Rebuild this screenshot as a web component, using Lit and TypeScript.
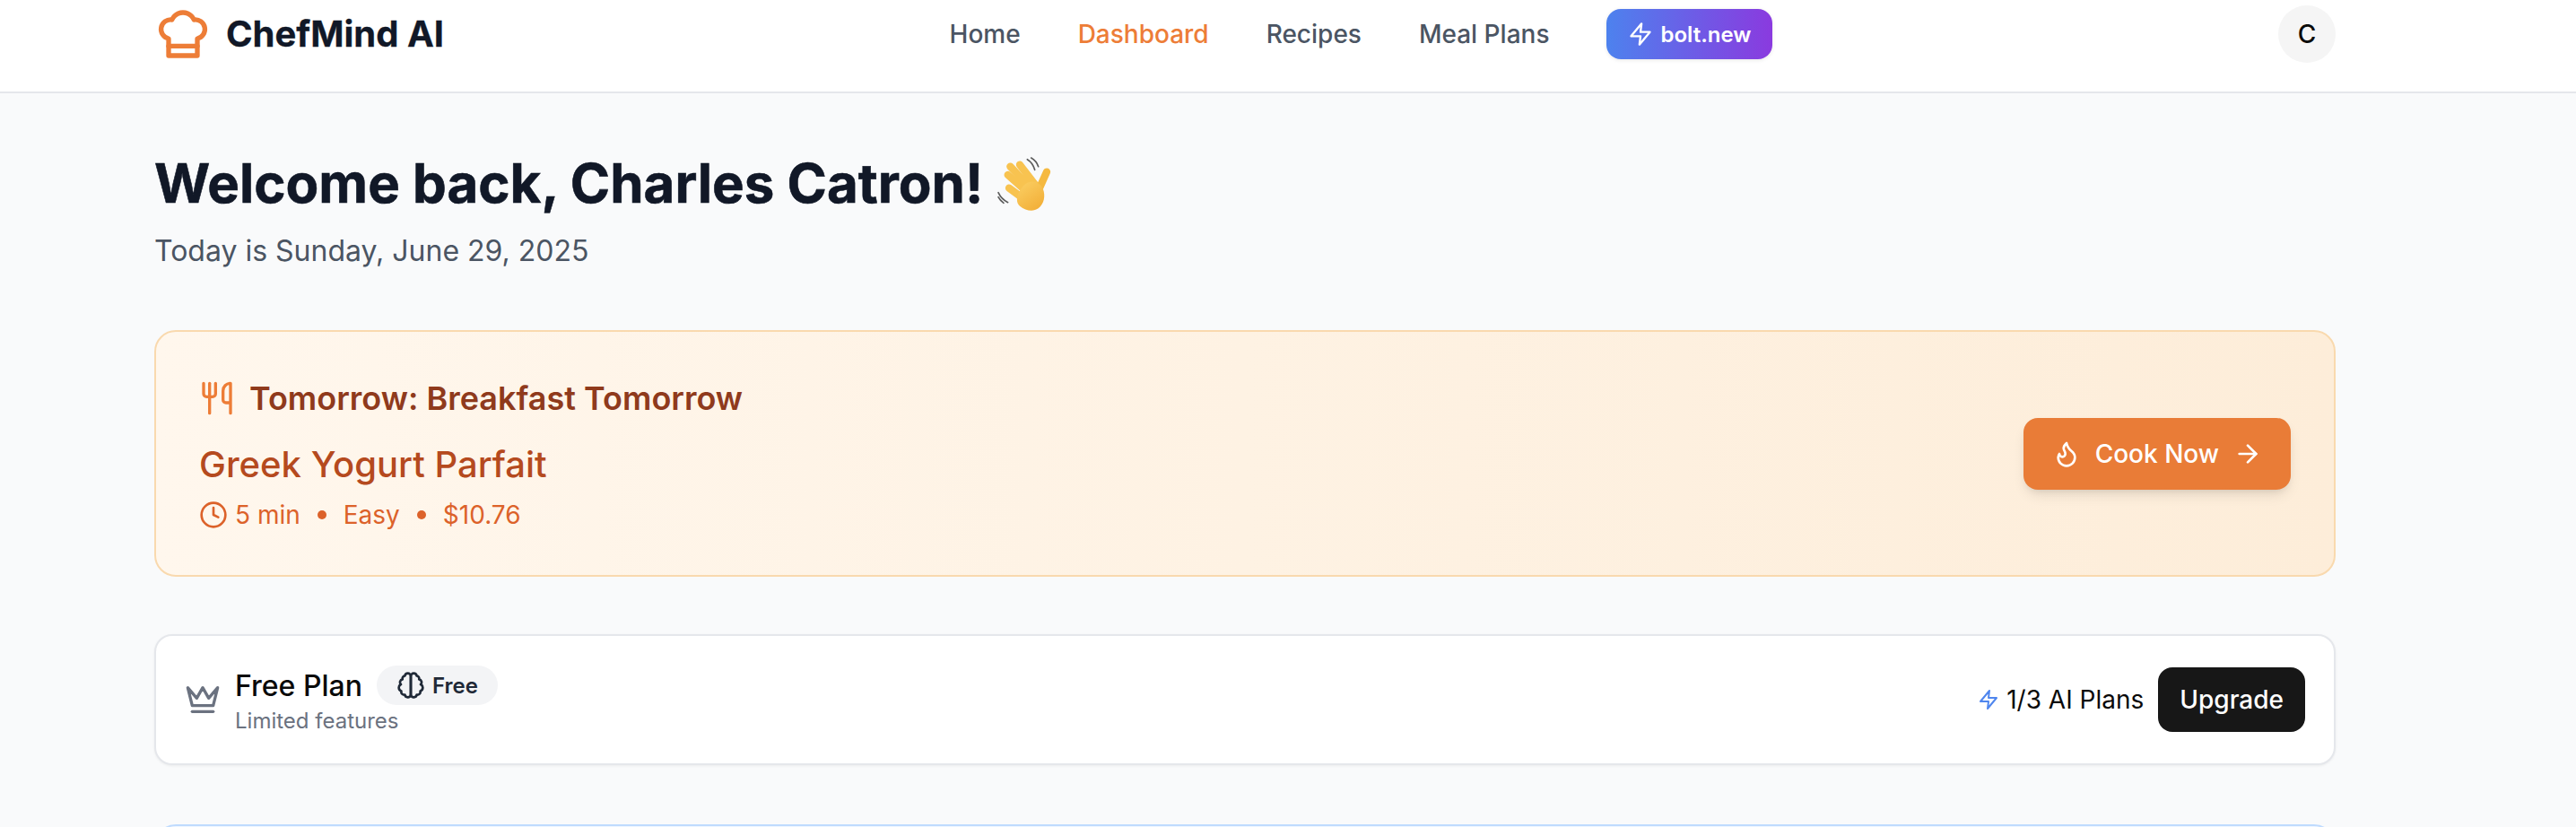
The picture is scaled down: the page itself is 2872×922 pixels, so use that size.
import { html, css, svg, LitElement } from "lit";
import { customElement } from "lit/decorators.js";

const icon = (size: number, body: unknown, width = 2) => html`
    <svg
        width=${size}
        height=${size}
        viewBox="0 0 24 24"
        fill="none"
        stroke="currentColor"
        stroke-width=${width}
        stroke-linecap="round"
        stroke-linejoin="round"
    >
        ${body}
    </svg>
`;

const chefHat = svg`<path d="M6 13.87A4 4 0 0 1 7.41 6a5.11 5.11 0 0 1 1.05-1.54 5 5 0 0 1 7.08 0A5.11 5.11 0 0 1 16.59 6 4 4 0 0 1 18 13.87V21H6Z" /><line x1="6" y1="17" x2="18" y2="17" />`;
const zap = svg`<path d="M13 2 3 14h9l-1 8 10-12h-9l1-8z" />`;
const utensils = svg`<path d="M3 2v7c0 1.1.9 2 2 2h4a2 2 0 0 0 2-2V2" /><path d="M7 2v20" /><path d="M21 15V2a5 5 0 0 0-5 5v6c0 1.1.9 2 2 2h3Zm0 0v7" />`;
const clock = svg`<circle cx="12" cy="12" r="10" /><polyline points="12 6 12 12 16 14" />`;
const flame = svg`<path d="M8.5 14.5A2.5 2.5 0 0 0 11 12c0-1.38-.5-2-1-3-1.072-2.143-.224-4.054 2-6 .5 2.5 2 4.9 4 6.5 2 1.6 3 3.5 3 5.5a7 7 0 1 1-14 0c0-1.153.433-2.294 1-3a2.5 2.5 0 0 0 2.5 2.5z" />`;
const arrowRight = svg`<path d="M5 12h14" /><path d="m12 5 7 7-7 7" />`;
const crown = svg`<path d="m2 4 3 12h14l3-12-6 7-4-7-4 7-6-7z" /><path d="M5 20h14" />`;
const brain = svg`<path d="M9.5 2A2.5 2.5 0 0 1 12 4.5v15a2.5 2.5 0 0 1-4.96.44 2.5 2.5 0 0 1-2.96-3.08 3 3 0 0 1-.34-5.58 2.5 2.5 0 0 1 1.32-4.24 2.5 2.5 0 0 1 1.98-3A2.5 2.5 0 0 1 9.5 2Z" /><path d="M14.5 2A2.5 2.5 0 0 0 12 4.5v15a2.5 2.5 0 0 0 4.96.44 2.5 2.5 0 0 0 2.96-3.08 3 3 0 0 0 .34-5.58 2.5 2.5 0 0 0-1.32-4.24 2.5 2.5 0 0 0-1.98-3A2.5 2.5 0 0 0 14.5 2Z" />`;

// no emoji font in the sandbox, so the waving hand is drawn from thick round strokes
const wavingHand = html`
    <svg class="wave" width="80" height="75" viewBox="0 0 240 225" fill="none" stroke-linecap="round">
        <defs>
            <linearGradient id="skin" x1="0.1" y1="0" x2="0.8" y2="1">
                <stop offset="0" stop-color="#fbcf63" />
                <stop offset="1" stop-color="#f2ae37" />
            </linearGradient>
        </defs>
        <g stroke="#f8c350" stroke-width="25">
            <path d="M72 128 132 172" />
            <path d="M68 84 138 146" />
            <path d="M76 56 146 130" />
            <path d="M108 50 160 118" />
            <path d="M198 74 172 132" stroke="#f5b940" />
        </g>
        <path
            d="M118 122C140 96 176 104 186 132 194 154 190 180 170 196 152 208 128 204 108 188 96 178 92 156 118 122Z"
            fill="url(#skin)"
        />
        <g stroke="#5c5c5c" stroke-width="5">
            <path d="M133 32C146 40 154 52 158 67" />
            <path d="M146 27C158 34 166 44 170 56" />
            <path d="M36 143C42 156 52 168 68 176" />
            <path d="M36 158C40 166 46 172 54 178" />
        </g>
    </svg>
`;

@customElement("app-root")
class AppRoot extends LitElement {
    static styles = css`
        :host {
            display: block;
            height: 922px;
            overflow: hidden;
            background: #f9fafb;
            font-family: Inter, "Liberation Sans", sans-serif;
            color: #0a0a0a;
        }

        .header {
            box-sizing: border-box;
            height: 104px;
            padding: 6px 268px 0 172px;
            background: #fff;
            border-bottom: 2px solid #e5e7eb;
            display: flex;
            justify-content: space-between;
            align-items: flex-start;
        }

        .brand {
            display: flex;
            align-items: center;
            gap: 16px;
            color: #ed7d37;
        }

        .brand-name {
            font-size: 40px;
            font-weight: 700;
            line-height: 64px;
            color: #111827;
            -webkit-text-stroke: 0.3px #111827;
        }

        .nav {
            display: flex;
            align-items: center;
            gap: 64px;
            height: 64px;
            font-size: 28px;
            font-weight: 500;
            color: #4b5563;
        }

        .nav .active {
            color: #ed7d37;
        }

        .bolt {
            display: flex;
            align-items: center;
            gap: 8px;
            height: 56px;
            padding: 0 24px;
            border-radius: 16px;
            background: linear-gradient(to right, #4d82ee, #8a3adf);
            box-shadow: 0 1px 4px rgba(0, 0, 0, 0.1);
            color: #fff;
            font-size: 24px;
            font-weight: 600;
        }

        .avatar {
            width: 64px;
            height: 64px;
            border-radius: 50%;
            background: #f5f5f5;
            display: flex;
            align-items: center;
            justify-content: center;
            font-size: 28px;
            font-weight: 500;
        }

        .main {
            padding: 64px 268px 0 172px;
        }

        h1 {
            margin: 0;
            height: 72px;
            display: flex;
            align-items: center;
            gap: 5px;
            font-size: 60px;
            line-height: 72px;
            font-weight: 700;
            color: #111827;
            -webkit-text-stroke: 0.6px #111827;
        }

        .date {
            margin: 12px 0 0;
            font-size: 32px;
            line-height: 56px;
            color: #4b5563;
        }

        .banner {
            box-sizing: border-box;
            height: 275px;
            margin-top: 60px;
            padding: 2px 48px 0;
            border: 2px solid #f9d9ae;
            border-radius: 24px;
            background: linear-gradient(to right, #fff7ed, #fdedd9);
            display: flex;
            align-items: center;
            justify-content: space-between;
        }

        .meal-label {
            display: flex;
            align-items: center;
            gap: 16px;
            font-size: 36px;
            font-weight: 600;
            line-height: 48px;
            color: #8f3a1c;
        }

        .meal-label svg {
            color: #ed7d37;
        }

        .meal-name {
            margin-top: 22px;
            font-size: 40px;
            font-weight: 500;
            line-height: 56px;
            color: #b54a1e;
        }

        .meta {
            margin-top: 8px;
            display: flex;
            align-items: center;
            gap: 8px;
            font-size: 28px;
            line-height: 40px;
            color: #dc622a;
        }

        .dot {
            width: 10px;
            height: 10px;
            margin: 0 11px;
            border-radius: 50%;
            background: currentColor;
        }

        .meta .time {
            display: flex;
            align-items: center;
            gap: 8px;
        }

        .cook {
            display: flex;
            align-items: center;
            gap: 16px;
            height: 80px;
            margin-bottom: 2px;
            padding: 0 32px;
            border-radius: 16px;
            background: #e97c37;
            box-shadow: 0 8px 16px -4px rgba(0, 0, 0, 0.12), 0 4px 8px -4px rgba(0, 0, 0, 0.1);
            color: #fff;
            font-size: 28px;
            font-weight: 500;
        }

        .plan {
            box-sizing: border-box;
            height: 146px;
            margin-top: 64px;
            padding: 0 32px;
            border: 2px solid #e5e7eb;
            border-radius: 20px;
            background: #fff;
            box-shadow: 0 1px 3px rgba(0, 0, 0, 0.06);
            display: flex;
            align-items: center;
            justify-content: space-between;
        }

        .plan-left {
            display: flex;
            align-items: center;
            gap: 16px;
        }

        .plan-left > svg {
            color: #6b7280;
        }

        .plan-title {
            display: flex;
            align-items: center;
            gap: 16px;
            height: 44px;
            font-size: 32px;
            font-weight: 500;
        }

        .badge {
            display: flex;
            align-items: center;
            gap: 8px;
            height: 44px;
            padding: 0 22px;
            border-radius: 22px;
            background: #f3f4f6;
            color: #1f2937;
            font-size: 24px;
            font-weight: 600;
        }

        .plan-sub {
            margin: 2px 0 -2px;
            font-size: 24px;
            line-height: 32px;
            color: #6b7280;
        }

        .plan-right {
            display: flex;
            align-items: center;
            gap: 16px;
            font-size: 28px;
        }

        .usage {
            display: flex;
            align-items: center;
            gap: 8px;
        }

        .usage svg {
            color: #4f86ee;
        }

        .upgrade {
            display: flex;
            align-items: center;
            height: 72px;
            padding: 0 24px;
            border-radius: 16px;
            background: #171717;
            color: #fff;
            font-weight: 500;
        }

        .next {
            height: 300px;
            margin-top: 66px;
            border: 2px solid #bfdbfe;
            border-radius: 24px;
            background: #eff6ff;
        }
    `;

    render() {
        return html`
            <header class="header">
                <div class="brand">
                    ${icon(64, chefHat)}
                    <span class="brand-name">ChefMind AI</span>
                </div>
                <nav class="nav">
                    <span>Home</span>
                    <span class="active">Dashboard</span>
                    <span>Recipes</span>
                    <span>Meal Plans</span>
                    <span class="bolt">${icon(28, zap)}bolt.new</span>
                </nav>
                <div class="avatar">C</div>
            </header>
            <main class="main">
                <h1>Welcome back, Charles Catron! ${wavingHand}</h1>
                <p class="date">Today is Sunday, June 29, 2025</p>
                <section class="banner">
                    <div>
                        <div class="meal-label">${icon(40, utensils)}Tomorrow: Breakfast Tomorrow</div>
                        <div class="meal-name">Greek Yogurt Parfait</div>
                        <div class="meta">
                            <span class="time">${icon(32, clock)}5 min</span>
                            <span class="dot"></span>
                            <span>Easy</span>
                            <span class="dot"></span>
                            <span>$10.76</span>
                        </div>
                    </div>
                    <div class="cook">${icon(32, flame)}Cook Now${icon(32, arrowRight)}</div>
                </section>
                <section class="plan">
                    <div class="plan-left">
                        ${icon(40, crown)}
                        <div>
                            <div class="plan-title">
                                Free Plan
                                <span class="badge">${icon(32, brain)}Free</span>
                            </div>
                            <div class="plan-sub">Limited features</div>
                        </div>
                    </div>
                    <div class="plan-right">
                        <span class="usage">${icon(24, zap)}1/3 AI Plans</span>
                        <span class="upgrade">Upgrade</span>
                    </div>
                </section>
                <section class="next"></section>
            </main>
        `;
    }
}

export default AppRoot;
